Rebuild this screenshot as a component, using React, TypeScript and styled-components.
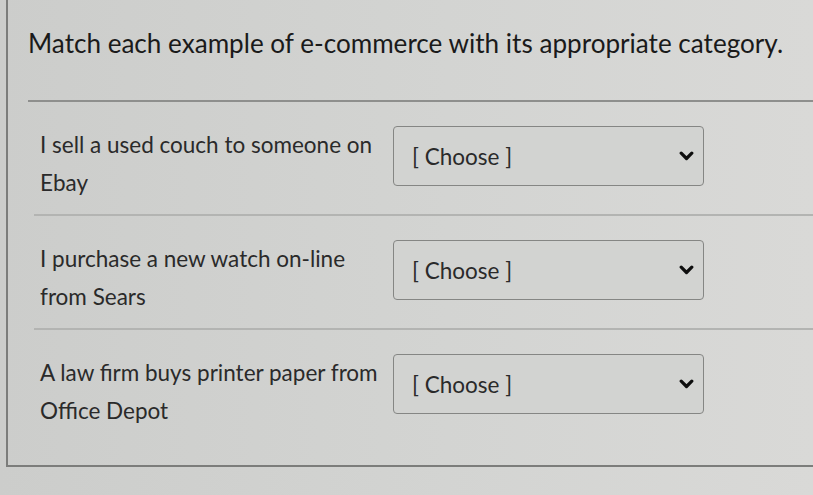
import React from 'react';
import styled, { createGlobalStyle } from 'styled-components';

// Page reset and the grey quiz backdrop
const GlobalStyle = createGlobalStyle`
  html, body {
    margin: 0;
    padding: 0;
  }
  body {
    background: linear-gradient(90deg, #cccdcb 0%, #d3d4d2 55%, #d9d9d7 100%);
    font-family: Lato, "Open Sans", sans-serif;
    color: #2b2b2b;
    overflow: hidden;
  }
`;

// Question card: only its left and bottom edges are visible
const QuestionCard = styled.div`
  margin-left: 6px;
  width: 830px;
  height: 467px;
  box-sizing: border-box;
  border-left: 2px solid #7c7d7b;
  border-bottom: 2px solid #7c7d7b;
`;

const Header = styled.div`
  margin-left: 20px;
  height: 102px;
  box-sizing: border-box;
  padding-top: 26px;
  border-bottom: 2px solid #8e8f8d;
`;

const Title = styled.h2`
  margin: 0;
  font-size: 26.1px;
  font-weight: 400;
  line-height: 34px;
  color: #1a1a1a;
`;

const Answers = styled.div`
  margin-left: 26px;
`;

const Row = styled.div<{ $last?: boolean }>`
  display: flex;
  align-items: flex-start;
  gap: 12px;
  padding: 24px 0 ${(p) => (p.$last ? '0' : '12px')};
  border-bottom: ${(p) => (p.$last ? 'none' : '2px solid #b3b4b2')};
`;

const Label = styled.div`
  width: 341px;
  padding-left: 6px;
  font-size: 22.5px;
  line-height: 38px;
  color: #2a2a2a;
`;

const Select = styled.div`
  width: 311px;
  height: 60px;
  box-sizing: border-box;
  display: flex;
  align-items: center;
  justify-content: space-between;
  padding: 0 9px 0 18px;
  border: 1px solid #858684;
  border-radius: 4px;
  background: #d2d3d1;
  font-size: 22.5px;
  color: #2a2a2a;
`;

const Chevron = () => (
  <svg width="15" height="10" viewBox="0 0 15 10" aria-hidden="true">
    <path d="M2.2 2.2 L7.5 7.5 L12.8 2.2" fill="none" stroke="#0e0e0e" strokeWidth="3.2" strokeLinecap="round" strokeLinejoin="round" />
  </svg>
);

const examples = [
  ['I sell a used couch to someone on', 'Ebay'],
  ['I purchase a new watch on-line', 'from Sears'],
  ['A law firm buys printer paper from', 'Office Depot'],
];

export default function App() {
  return (
    <>
      <GlobalStyle />
      <QuestionCard>
        <Header>
          <Title>Match each example of e-commerce with its appropriate category.</Title>
        </Header>
        <Answers>
          {examples.map(([first, second], i) => (
            <Row key={first} $last={i === examples.length - 1}>
              <Label>
                {first}
                <br />
                {second}
              </Label>
              <Select>
                <span>[ Choose ]</span>
                <Chevron />
              </Select>
            </Row>
          ))}
        </Answers>
      </QuestionCard>
    </>
  );
}
